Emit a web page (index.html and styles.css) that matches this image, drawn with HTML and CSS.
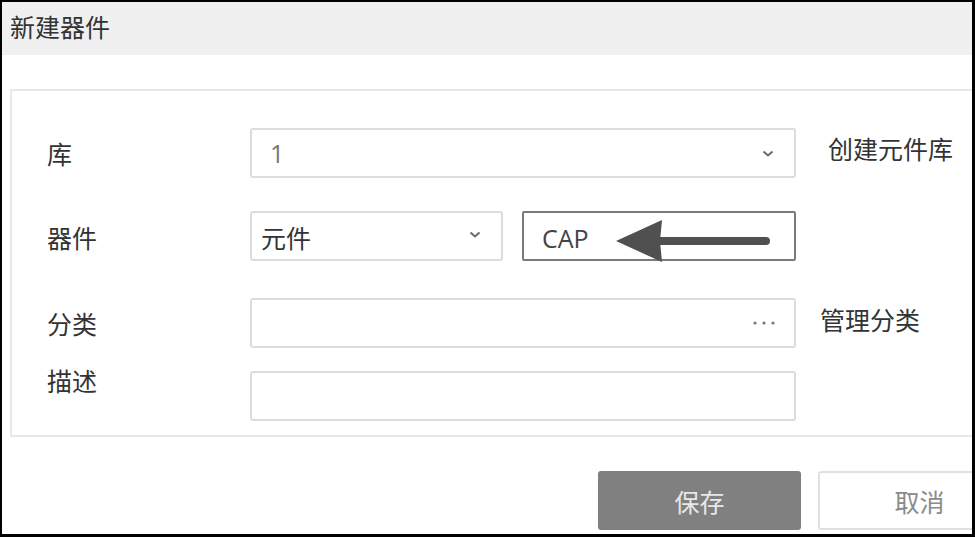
FILE: index.html
```html
<!DOCTYPE html>
<html lang="zh-CN">
<head>
<meta charset="utf-8">
<title>新建器件</title>
<link rel="stylesheet" href="styles.css">
</head>
<body>
<div class="window">
  <div class="titlebar">新建器件</div>
  <div class="main">
    <div class="panel">
      <div class="row row-1">
        <div class="label">库</div>
        <div class="field field-wide pad-lib">
          <span class="value value-muted">1</span>
          <svg class="chev" width="12" height="7" viewBox="0 0 12 7"><path d="M1.5 1.5 L6 5.5 L10.5 1.5" fill="none" stroke="#6a6a6a" stroke-width="2"/></svg>
        </div>
        <div class="link link-1">创建元件库</div>
      </div>
      <div class="row row-2">
        <div class="label">器件</div>
        <div class="field field-type pad-type">
          <span class="value">元件</span>
          <svg class="chev" width="12" height="7" viewBox="0 0 12 7"><path d="M1.5 1.5 L6 5.5 L10.5 1.5" fill="none" stroke="#6a6a6a" stroke-width="2"/></svg>
        </div>
        <div class="field field-name">
          <span class="value value-name">CAP</span>
          <svg class="arrow" width="260" height="50" viewBox="0 0 260 50">
            <polygon points="94,30 140,9 138,30 140,51" fill="#505050"/>
            <line x1="136" y1="30" x2="244" y2="30" stroke="#505050" stroke-width="8" stroke-linecap="round"/>
          </svg>
        </div>
      </div>
      <div class="row row-3">
        <div class="label">分类</div>
        <div class="field field-wide pad-cat">
          <span class="value"></span>
          <svg class="dots" width="26" height="4" viewBox="0 0 26 4"><circle cx="3" cy="2" r="1.6" fill="#777"/><circle cx="12" cy="2" r="1.6" fill="#777"/><circle cx="21" cy="2" r="1.6" fill="#777"/></svg>
        </div>
        <div class="link link-3">管理分类</div>
      </div>
      <div class="row row-4">
        <div class="label label-top">描述</div>
        <div class="field field-wide"></div>
      </div>
    </div>
    <div class="actions">
      <div class="btn btn-primary">保存</div>
      <div class="btn btn-default">取消</div>
    </div>
  </div>
</div>
</body>
</html>
```
FILE: styles.css
```css
html, body {
  margin: 0;
  padding: 0;
  background: #ffffff;
}
body {
  font-family: "Open Sans", "Noto Sans CJK SC", sans-serif;
  color: #333333;
}
.window {
  width: 975px;
  height: 537px;
  box-sizing: border-box;
  border-style: solid;
  border-color: #000000;
  border-width: 2px 3px 3px 2px;
  overflow: hidden;
  background: #ffffff;
}
.titlebar {
  height: 53px;
  background: #f0f0f0;
  padding-left: 8px;
  font-family: "Noto Sans CJK SC", sans-serif;
  font-size: 25px;
  line-height: 48px;
  color: #333333;
}
.main {
  padding-top: 34px;
  padding-left: 8px;
  width: 1100px;
}
.panel {
  width: 1000px;
  border: 2px solid #e8e8e8;
  padding: 37px 0 14px 35px;
}
.row {
  display: flex;
  align-items: center;
  height: 50px;
}
.row-1 { margin-bottom: 33px; }
.row-2 { margin-bottom: 37px; }
.row-3 { margin-bottom: 23px; }
.label {
  width: 203px;
  font-family: "Noto Sans CJK SC", sans-serif;
  font-size: 25px;
  line-height: 30px;
  color: #333333;
}
.row-2 .label { margin-top: 2px; }
.label-top {
  align-self: flex-start;
  margin-top: -6px;
}
.field {
  height: 50px;
  box-sizing: border-box;
  border: 2px solid #dcdcdc;
  border-radius: 3px;
  display: flex;
  align-items: center;
  justify-content: space-between;
  padding: 0 20px 0 18px;
  background: #ffffff;
}
.field-wide { width: 546px; }
.field-type { width: 253px; padding-left: 9px; }
.field-name {
  width: 274px;
  margin-left: 19px;
  border-color: #7a7a7a;
  border-radius: 2px;
  position: relative;
  justify-content: flex-start;
}
.pad-cat { padding-right: 16px; }
.value {
  font-size: 25px;
  line-height: 30px;
  font-family: "Open Sans", "Noto Sans CJK SC", sans-serif;
  color: #333333;
}
.row-2 .value { margin-top: 4px; }
.value-muted { color: #777777; }
.value-name { color: #444444; margin-top: 2px; }
.chev { display: block; }
.row-2 .chev { margin-top: -4px; }
.dots { display: block; }
.arrow {
  position: absolute;
  left: -2px;
  top: -2px;
  width: 260px;
  height: 50px;
  overflow: visible;
}
.link {
  font-family: "Noto Sans CJK SC", sans-serif;
  font-size: 25px;
  line-height: 30px;
  color: #333333;
}
.link-1 { margin-left: 32px; margin-bottom: 10px; }
.link-3 { margin-left: 24px; margin-bottom: 8px; }
.actions {
  display: flex;
  gap: 17px;
  margin-top: 34px;
  padding-left: 588px;
}
.btn {
  width: 203px;
  height: 59px;
  box-sizing: border-box;
  border-radius: 3px;
  display: flex;
  align-items: center;
  justify-content: center;
  font-family: "Noto Sans CJK SC", sans-serif;
  font-size: 25px;
  line-height: 30px;
  flex: none;
}
.btn-primary {
  background: #808080;
  color: #e8e8e8;
}
.btn-default {
  background: #ffffff;
  border: 2px solid #e0e0e0;
  color: #8a8a8a;
}
```
